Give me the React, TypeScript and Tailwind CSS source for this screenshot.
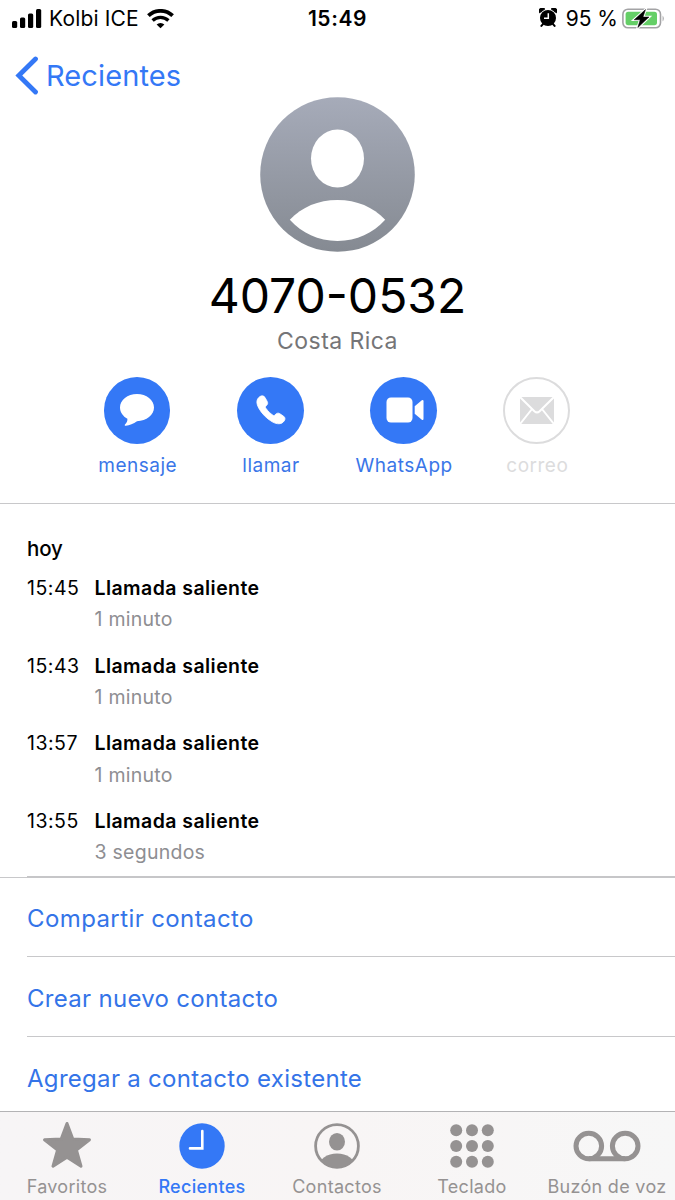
import type { ReactNode } from "react";

const calls = [
  { time: "15:45", length: "1 minuto" },
  { time: "15:43", length: "1 minuto" },
  { time: "13:57", length: "1 minuto" },
  { time: "13:55", length: "3 segundos" },
];

function StatusBar() {
  return (
    <div className="grid h-[37px] grid-cols-[1fr_auto_1fr] items-center pl-3 pr-[10px] text-black">
      <div className="flex items-center">
        <svg width="30" height="20" viewBox="0 0 30 20">
          <rect x="0" y="12" width="5.2" height="7" rx="1.5" />
          <rect x="8" y="8.5" width="5.2" height="10.5" rx="1.5" />
          <rect x="16" y="4.5" width="5.2" height="14.5" rx="1.5" />
          <rect x="24" y="0" width="5.2" height="19" rx="1.5" />
        </svg>
        <span className="ml-[7px] w-[93px] whitespace-nowrap text-[21px] leading-none tracking-[0.15px]">Kolbi ICE</span>
        <svg width="27" height="20" viewBox="0 0 27 20" className="ml-[5px]" fill="none" stroke="black">
          <path d="M1.4 6.7 A17.5 17.5 0 0 1 25.6 6.7" strokeWidth="3.8" />
          <path d="M5.6 11.5 A11.5 11.5 0 0 1 21.4 11.5" strokeWidth="3.3" />
          <path d="M13.5 19.2 L9.6 15.6 A5.6 5.6 0 0 1 17.4 15.6 Z" fill="black" stroke="none" />
        </svg>
      </div>
      <span className="mr-[2px] text-[21px] font-semibold leading-none tracking-[0.6px]">15:49</span>
      <div className="flex items-center justify-end">
        <svg width="18" height="19" viewBox="0 0 18 19" className="mb-[2px]">
          <circle cx="9" cy="10" r="8" />
          <path d="M4.2 15.8 L2.4 17.9 M13.8 15.8 L15.6 17.9" stroke="black" strokeWidth="2" strokeLinecap="round" />
          <path d="M0.6 4.8 A3 3 0 0 1 5.8 1 Z M17.4 4.8 A3 3 0 0 0 12.2 1 Z" stroke="black" strokeWidth="1" />
          <path d="M9.3 5.2 V10.3 H5" fill="none" stroke="white" strokeWidth="1.5" />
        </svg>
        <span className="ml-[9px] whitespace-nowrap text-[21px] leading-none">95 %</span>
        <svg width="43" height="22" viewBox="0 0 43 22" className="ml-1">
          <rect x="0.9" y="1.2" width="37.6" height="18.6" rx="5" fill="white" stroke="#a3a3a5" strokeWidth="1.6" />
          <rect x="3.6" y="3.8" width="31.4" height="13.4" rx="2.6" fill="#65cf67" />
          <path d="M40.6 7.4 Q43 10.5 40.6 13.6 Z" fill="#a3a3a5" />
          <path d="M23.5 1.6 L12.2 11.8 H18.2 L15.8 19.6 L27 9 H21 Z" stroke="white" strokeWidth="2.6" />
          <path d="M23.5 1.6 L12.2 11.8 H18.2 L15.8 19.6 L27 9 H21 Z" stroke="black" strokeWidth="0.5" />
        </svg>
      </div>
    </div>
  );
}

function Avatar() {
  return (
    <svg width="155" height="155" viewBox="0 0 155 155">
      <defs>
        <linearGradient id="avatar" x1="0" y1="0" x2="0" y2="1">
          <stop offset="0" stopColor="#a6abb9" />
          <stop offset="1" stopColor="#858a92" />
        </linearGradient>
      </defs>
      <circle cx="77.5" cy="77.5" r="77.3" fill="url(#avatar)" />
      <ellipse cx="77.5" cy="61.5" rx="26.5" ry="29" fill="white" />
      <path d="M29.8 122.8 C42 110 58 103 77.5 103 C97 103 113 110 125.2 122.8 C113 136 97 144 77.5 144 C58 144 42 136 29.8 122.8 Z" fill="white" />
    </svg>
  );
}

function Action({ label, disabled, children }: { label: string; disabled?: boolean; children: ReactNode }) {
  return (
    <div className={`flex w-[133.2px] flex-col items-center ${disabled ? "text-[#dcdcdd]" : "text-[#3a76e8]"}`}>
      <div
        className={`flex size-[66.6px] items-center justify-center rounded-full ${
          disabled ? "border-2 border-[#dcdcdd]" : "bg-[#3478f6]"
        }`}
      >
        {children}
      </div>
      <span className="ml-[1.5px] mt-[10.8px] whitespace-nowrap text-[19px] leading-6 tracking-[0.5px]">{label}</span>
    </div>
  );
}

function Tab({ label, active, children }: { label: string; active?: boolean; children: ReactNode }) {
  return (
    <div className={`flex w-[135px] flex-col items-center ${active ? "font-medium text-[#3478f6]" : "text-[#959292]"}`}>
      <div className="flex h-[68px] items-center">{children}</div>
      <span className="-mt-[3px] ml-px whitespace-nowrap text-[18px] leading-5 tracking-[0.3px]">{label}</span>
    </div>
  );
}

export default function App() {
  return (
    <div className="flex h-[1200px] w-[675px] flex-col overflow-hidden bg-white font-['Inter','Liberation_Sans',sans-serif]">
      <StatusBar />

      <div className="flex h-[60px] items-start pl-[15px] text-[#3478f6]">
        <svg width="24" height="40" viewBox="0 0 24 40" className="mt-[19px]" fill="none">
          <path d="M20.5 3 L3.8 19.5 L20.5 36" stroke="#3478f6" strokeWidth="4.8" strokeLinecap="round" />
        </svg>
        <span className="ml-[7px] mt-[21px] text-[29px] leading-9 tracking-[0.1px]">Recientes</span>
      </div>

      <div className="flex h-[406px] flex-col items-center">
        <Avatar />
        <h1 className="mt-[14px] text-[48px] leading-[60px] text-black">4070-0532</h1>
        <p className="-mt-[1px] text-[23px] leading-8 tracking-[0.45px] text-[#757577]">Costa Rica</p>
        <div className="mr-[1.4px] mt-5 flex">
          <Action label="mensaje">
            <svg width="36" height="34" viewBox="0 0 36 34" fill="white">
              <path d="M18 1 C27.5 1 35 7 35 14.5 C35 22 27.5 28 18 28.2 C14.5 30.5 10.5 32.5 6.8 32.8 C5.5 32.8 5.4 32 6.2 31.2 C7.8 29.7 8.6 27.8 8.4 25.8 C4 23.3 1 19.2 1 14.5 C1 7 8.5 1 18 1 Z" />
            </svg>
          </Action>
          <Action label="llamar">
            <svg width="30" height="30" viewBox="0 0 30 30" fill="white" stroke="white" strokeWidth="0.8" className="ml-px">
              <path d="M3.6 1.8 C5.2 .4 7.6 .6 8.9 2.3 L11.2 6.4 C12 7.9 11.7 9.2 10.7 10.2 L9.8 11.2 C9.2 12 9.4 12.5 9.9 13.3 C12 16.3 14.2 18.3 17 20.3 C17.8 20.8 18.3 20.7 18.9 20 L20 19 C21.1 18 22.4 17.9 23.6 18.6 L27.6 21.2 C29.2 22.4 29.4 24.3 28.2 25.9 C25.7 29.5 21.2 29.6 16.2 26.8 C10.4 23.3 5.9 18.8 2.8 13.2 C.1 8.2 .2 4.4 3.6 1.8 Z" />
            </svg>
          </Action>
          <Action label="WhatsApp">
            <svg width="38" height="26" viewBox="0 0 38 26" fill="white" className="ml-[4px]">
              <rect x="0.5" y="0.5" width="26" height="25" rx="4.5" />
              <path d="M28.7 9.2 L35.8 3.3 Q37.5 2.3 37.5 4.3 V21.7 Q37.5 23.7 35.8 22.7 L28.7 16.8 Z" />
            </svg>
          </Action>
          <Action label="correo" disabled>
            <svg width="34" height="27" viewBox="0 0 34 27">
              <rect width="34" height="27" rx="0.8" fill="#dcdcdd" />
              <path d="M0 0 L14.4 14.2 Q17 16.6 19.6 14.2 L34 0 M0 27 L12 12 M34 27 L22 12" fill="none" stroke="white" strokeWidth="2" />
            </svg>
          </Action>
        </div>
      </div>

      <div className="h-[373px] border-t border-[#c8c8ca] pl-[27px] pt-[32px] text-black">
        <h2 className="text-[20.5px] font-medium leading-[26px] -tracking-[0.1px]">hoy</h2>
        <div className="mt-[13px]">
          {calls.map((call) => (
            <div key={call.time} className="flex h-[77.7px] text-[19.5px] leading-[26px]">
              <span className="w-[67.5px] tracking-[0.5px]">{call.time}</span>
              <div>
                <p className="font-semibold tracking-[0.43px]">Llamada saliente</p>
                <p className="mt-[5.4px] tracking-[0.25px] text-[#8e8e92]">{call.length}</p>
              </div>
            </div>
          ))}
        </div>
      </div>

      <div className="flex h-[2px] items-end bg-white">
        <div className="h-px w-[27px] bg-[#c8c8ca]" />
        <div className="h-[2px] flex-1 bg-[#c6c6c8]" />
      </div>

      <div className="h-[233px] pl-[27px] text-[24px] tracking-[0.3px] text-[#3474e8]">
        <div className="flex h-[79px] items-center border-b border-[#c8c8ca] pt-[3px] tracking-[0.4px]">Compartir contacto</div>
        <div className="flex h-20 items-center border-b border-[#c8c8ca] pt-[4px]">Crear nuevo contacto</div>
        <div className="flex h-20 items-center pt-[3px]">Agregar a contacto existente</div>
      </div>

      <div className="-ml-px flex h-[89px] w-[677px] border-t border-[#b3b3b5] bg-gradient-to-r from-[#f7f5f6] via-[#f8f5f5] to-[#f7f7f7]">
        <Tab label="Favoritos">
          <svg width="50" height="48" viewBox="0 0 50 48" fill="#959292" stroke="#959292" strokeWidth="3" strokeLinejoin="round" className="mb-[2px]">
            <path d="M25 2.5 L30.8 18 L47.5 18.8 L34.4 29 L39 45.2 L25 36.2 L11 45.2 L15.6 29 L2.5 18.8 L19.2 18 Z" />
          </svg>
        </Tab>
        <Tab label="Recientes" active>
          <svg width="46" height="46" viewBox="0 0 46 46">
            <circle cx="23" cy="23" r="22.7" fill="#3478f6" />
            <path d="M23.3 8 V25.4 H11" fill="none" stroke="white" strokeWidth="2.6" strokeLinecap="round" />
          </svg>
        </Tab>
        <Tab label="Contactos">
          <svg width="46" height="46" viewBox="0 0 46 46" fill="#959292" className="ml-px">
            <defs>
              <clipPath id="contact">
                <circle cx="23" cy="23" r="22" />
              </clipPath>
            </defs>
            <circle cx="23" cy="23" r="21.4" fill="none" stroke="#959292" strokeWidth="2.8" />
            <ellipse cx="23" cy="18.8" rx="8" ry="8.8" />
            <ellipse cx="23" cy="43" rx="18" ry="12.5" clipPath="url(#contact)" />
          </svg>
        </Tab>
        <Tab label="Teclado">
          <svg width="44" height="44" viewBox="0 0 44 44" fill="#959292">
            {[6.2, 22, 37.8].map((y) => [6.2, 22, 37.8].map((x) => <circle key={`${x}-${y}`} cx={x} cy={y} r="6" />))}
          </svg>
        </Tab>
        <Tab label="Buzón de voz">
          <svg width="68" height="32" viewBox="0 0 68 32" fill="none" stroke="#959292" strokeWidth="5" className="ml-px">
            <circle cx="15.8" cy="16" r="12.8" />
            <circle cx="52.2" cy="16" r="12.8" />
            <path d="M15.8 28.8 H52.2" />
          </svg>
        </Tab>
      </div>
    </div>
  );
}
